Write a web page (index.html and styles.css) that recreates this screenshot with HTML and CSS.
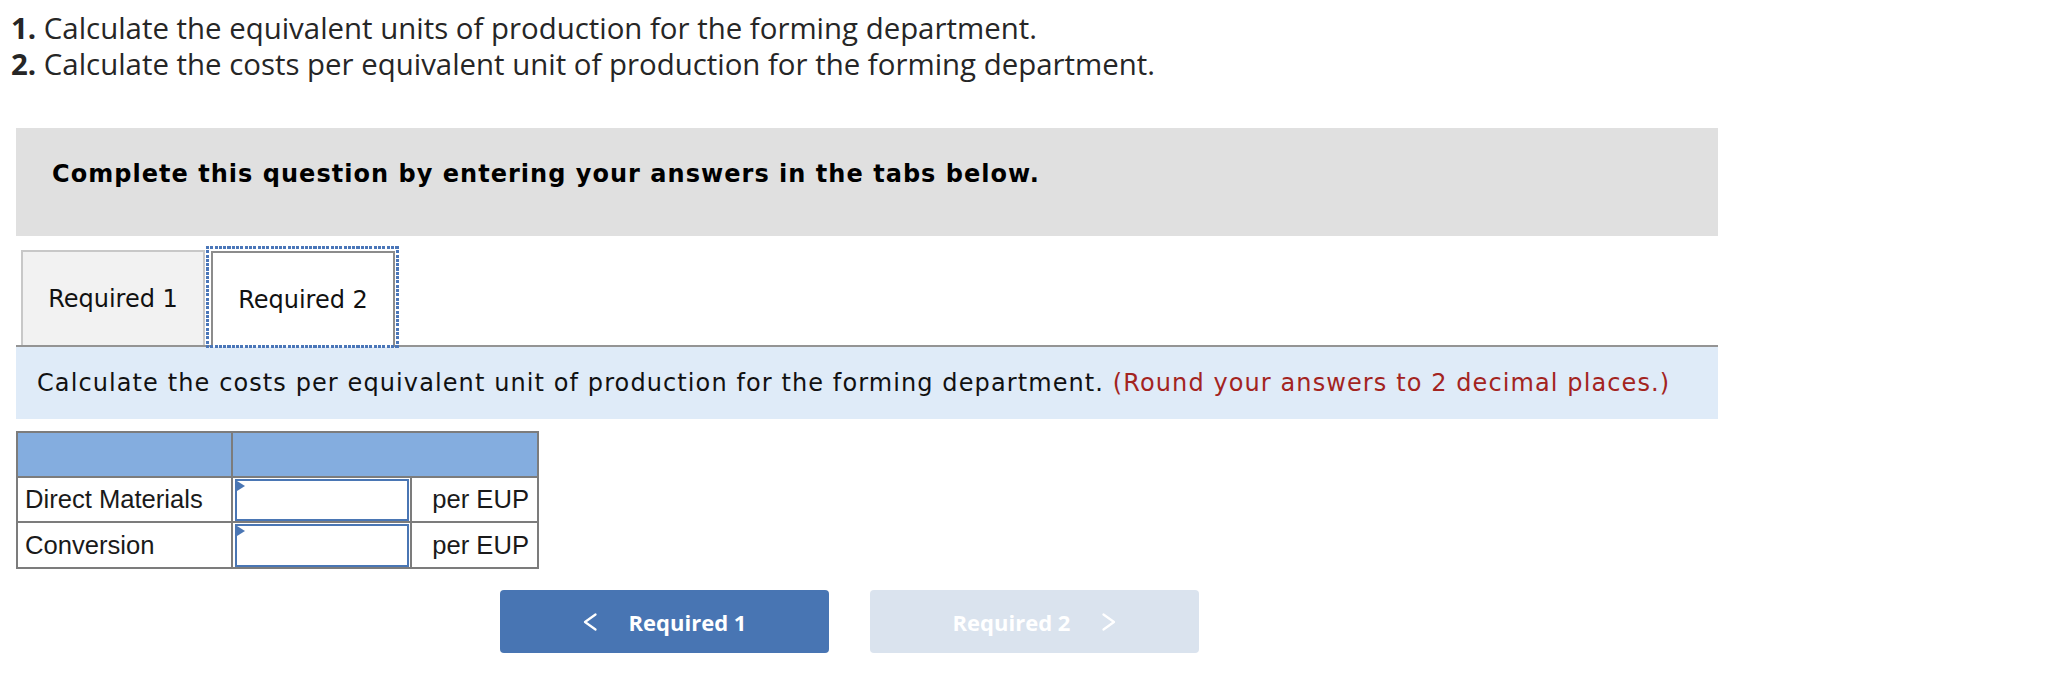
FILE: index.html
```html
<!DOCTYPE html>
<html>
<head>
<meta charset="utf-8">
<link rel="stylesheet" href="styles.css">
</head>
<body>
<div class="intro">
  <p><b>1.</b> Calculate the equivalent units of production for the forming department.</p>
  <p><b>2.</b> Calculate the costs per equivalent unit of production for the forming department.</p>
</div>
<div class="main">
  <div class="instr">Complete this question by entering your answers in the tabs below.</div>
  <div class="tabs">
    <div class="tab">Required 1</div>
    <div class="tab active">Required 2</div>
  </div>
  <div class="panel">Calculate the costs per equivalent unit of production for the forming department. <span class="note">(Round your answers to 2 decimal places.)</span></div>
  <table class="grid">
    <tr class="head"><td class="c1"></td><td class="c2" colspan="2"></td></tr>
    <tr class="r1"><td class="c1">Direct Materials</td><td class="c2"><div class="inp"></div></td><td class="c3">per EUP</td></tr>
    <tr class="r2"><td class="c1">Conversion</td><td class="c2"><div class="inp"></div></td><td class="c3">per EUP</td></tr>
  </table>
  <div class="nav">
    <div class="btn prev">
      <svg class="chev" width="14" height="18" viewBox="0 0 14 18"><path d="M12.5 1.5 L2 9 L12.5 16.5" fill="none" stroke="#fff" stroke-width="2.2" stroke-linecap="round" stroke-linejoin="round"/></svg>
      <span>Required 1</span>
    </div>
    <div class="btn next">
      <span>Required 2</span>
      <svg class="chev" width="14" height="18" viewBox="0 0 14 18"><path d="M1.5 1.5 L12 9 L1.5 16.5" fill="none" stroke="#fff" stroke-width="2.2" stroke-linecap="round" stroke-linejoin="round"/></svg>
    </div>
  </div>
</div>
</body>
</html>
```

FILE: styles.css
```css
html, body {
  margin: 0;
  padding: 0;
  background: #fff;
}

.intro {
  padding: 10px 0 0 11px;
  font-family: "Open Sans", "Liberation Sans", sans-serif;
  font-size: 29.4px;
  line-height: 36px;
  color: #262626;
}
.intro p {
  margin: 0;
  white-space: nowrap;
}
.intro b {
  font-weight: 700;
}

.main {
  margin-left: 16px;
  width: 1702px;
}

.instr {
  margin-top: 46px;
  height: 108px;
  box-sizing: border-box;
  padding: 32px 0 0 36px;
  background: #e0e0e0;
  font-family: "DejaVu Sans", Verdana, sans-serif;
  font-weight: 700;
  font-size: 24px;
  letter-spacing: 1.03px;
  line-height: 28px;
  color: #000;
}

.tabs {
  display: flex;
  align-items: flex-end;
  margin-top: 14px;
  padding-left: 5px;
  gap: 6px;
  height: 95px;
  position: relative;
  z-index: 1;
}
.tab {
  box-sizing: border-box;
  width: 184px;
  height: 95px;
  display: flex;
  align-items: center;
  justify-content: center;
  background: #f2f2f2;
  border: 2px solid #c8c8c8;
  border-bottom: none;
  font-family: "DejaVu Sans", Verdana, sans-serif;
  font-size: 24px;
  color: #111;
}
.tab.active {
  position: relative;
  height: 96px;
  margin-bottom: -2px;
  background: #fff;
  border-color: #8c8c8c;
}
.tab.active::after {
  content: "";
  position: absolute;
  left: -7px;
  right: -6px;
  top: -7px;
  bottom: -1px;
  pointer-events: none;
  background:
    repeating-linear-gradient(90deg, #4a76b8 0 3px, transparent 3px 4.3px) top / 100% 3px no-repeat,
    repeating-linear-gradient(90deg, #4a76b8 0 3px, transparent 3px 4.3px) bottom / 100% 3px no-repeat,
    repeating-linear-gradient(180deg, #4a76b8 0 3px, transparent 3px 4.3px) left / 3px 100% no-repeat,
    repeating-linear-gradient(180deg, #4a76b8 0 3px, transparent 3px 4.3px) right / 3px 100% no-repeat;
}

.panel {
  border-top: 2px solid #949494;
  background: #dfebf8;
  height: 72px;
  box-sizing: content-box;
  padding: 0 0 0 21px;
  display: flex;
  align-items: center;
  font-family: "DejaVu Sans", Verdana, sans-serif;
  font-size: 24px;
  letter-spacing: 1.1px;
  line-height: 28px;
  color: #111;
  white-space: pre;
}
.note {
  color: #a3241f;
}

.grid {
  margin-top: 12px;
  border-collapse: separate;
  border-spacing: 0;
  border-top: 2px solid #7c7c7c;
  border-left: 2px solid #7c7c7c;
  font-family: "Liberation Sans", Arial, sans-serif;
  font-size: 25.6px;
  color: #1a1a1a;
}
.grid td {
  border-right: 2px solid #7c7c7c;
  border-bottom: 2px solid #7c7c7c;
  padding: 0;
  box-sizing: border-box;
}
.grid tr.head td {
  height: 45px;
  background: #84addf;
}
.grid tr.r1 td {
  height: 45px;
}
.grid tr.r2 td {
  height: 46px;
}
.grid .c1 {
  width: 215px;
  padding-left: 7px;
}
.grid .c2 {
  width: 179px;
  padding: 1px 1px 0 2px;
  vertical-align: top;
}
.grid .c3 {
  width: 127px;
  text-align: right;
  padding-right: 8px;
}
.inp {
  position: relative;
  box-sizing: border-box;
  height: 42px;
  border: 2px solid #4a76b4;
  background: #fff;
}
.r2 .inp {
  height: 43px;
}
.inp::before {
  content: "";
  position: absolute;
  left: 0;
  top: 0;
  border-top: 5px solid transparent;
  border-bottom: 5px solid transparent;
  border-left: 8px solid #4a76b4;
}

.nav {
  display: flex;
  gap: 41px;
  margin: 21px 0 0 484px;
}
.btn {
  width: 329px;
  height: 63px;
  border-radius: 4px;
  display: flex;
  align-items: center;
  justify-content: center;
  gap: 32px;
  font-family: "Open Sans", "Liberation Sans", sans-serif;
  font-weight: 700;
  font-size: 22px;
  color: #fff;
}
.btn.prev {
  background: #4875b3;
}
.btn.next {
  background: #dae3ee;
}
.chev {
  display: block;
}
```
